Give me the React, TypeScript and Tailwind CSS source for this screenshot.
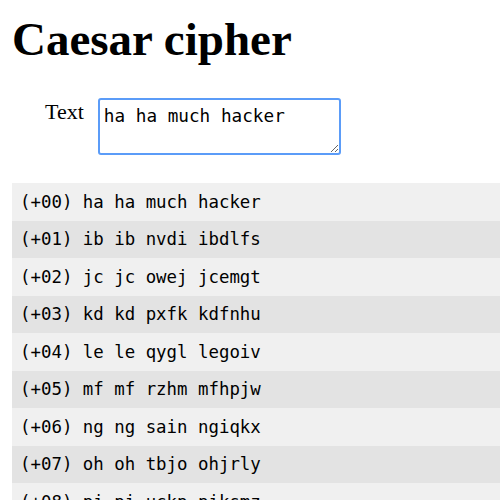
import React, { useState } from 'react'

const shift = (s: string, n: number) =>
    s.replace(/[a-z]/g, c => String.fromCharCode(((c.charCodeAt(0) - 97 + n) % 26) + 97))

const App = () => {
    const [text, setText] = useState('ha ha much hacker')
    const rows = Array.from({ length: 26 }, (_, i) => i)

    return (
        <div className="bg-white h-screen overflow-hidden">
            <h1 className="font-['Liberation_Serif',serif] font-bold text-[47px] leading-[54px] text-black pl-[12px] pt-[12px]">
                Caesar cipher
            </h1>
            <div className="flex items-start mt-[32px]">
                <label className="font-['Liberation_Serif',serif] text-[22px] leading-[26px] text-black pl-[45px] pr-[14px] pt-[1px]">
                    Text
                </label>
                <textarea
                    value={text}
                    onChange={e => setText(e.target.value)}
                    className="w-[243px] h-[57px] border-2 border-[#5b9cf8] rounded-[3px] px-[4px] pt-[4px] font-['DejaVu_Sans_Mono',monospace] text-[17.7px] leading-[24px] text-black outline-none resize"
                />
            </div>
            <div className="ml-[12px] mt-[28px]">
                {rows.map(i => (
                    <div
                        key={i}
                        className={`h-[37.5px] flex items-center pl-[8px] font-['DejaVu_Sans_Mono',monospace] text-[17.4px] text-black whitespace-pre ${i % 2 === 0 ? 'bg-[#f0f0f0]' : 'bg-[#e3e3e3]'}`}
                    >
                        {`(+${String(i).padStart(2, '0')}) ${shift(text, i)}`}
                    </div>
                ))}
            </div>
        </div>
    )
}

export default App
